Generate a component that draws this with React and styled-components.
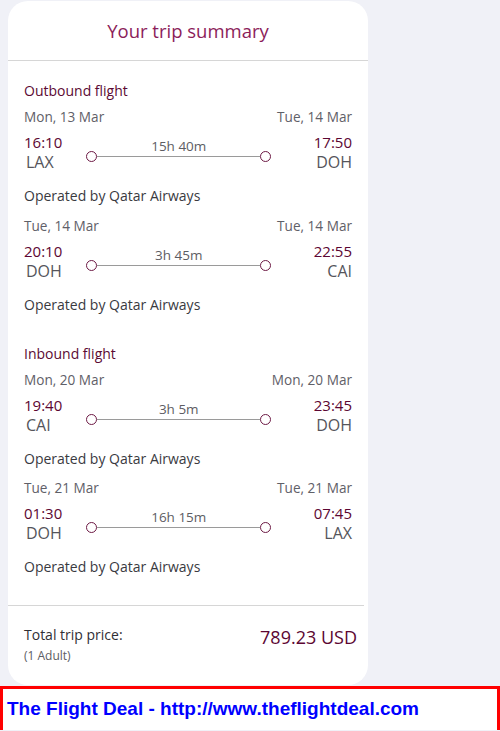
import React from "react";
import styled, { createGlobalStyle } from "styled-components";

const Global = createGlobalStyle`
  html, body { margin: 0; padding: 0; background: #f0f1f7; }
  body { font-family: "Open Sans", "Noto Sans", sans-serif; }
  * { box-sizing: border-box; }
`;

const Page = styled.div`
  width: 500px;
  display: flex;
  flex-direction: column;
`;

const CardWrap = styled.div`
  padding: 1px 8px 1px 8px;
`;

const Card = styled.div`
  width: 360px;
  background: #fff;
  border-radius: 20px;
  overflow: hidden;
`;

const Header = styled.div`
  height: 60px;
  display: flex;
  align-items: center;
  justify-content: center;
  border-bottom: 1px solid #d6d6d6;
`;

const Title = styled.h2`
  margin: 0;
  font-weight: 400;
  font-size: 18.5px;
  line-height: 24px;
  color: #8c1d5a;
`;

const Body = styled.div`
  padding: 20px 16px 28px 16px;
  display: flex;
  flex-direction: column;
`;

const Section = styled.div`
  display: flex;
  flex-direction: column;
  gap: 9px;
  & + & { margin-top: 29.5px; }
  &:first-child { gap: 9.5px; }
`;

const SectionLabel = styled.div`
  font-size: 14px;
  line-height: 20px;
  color: #5c0a33;
  margin-bottom: -3.5px;
`;

const Segment = styled.div`
  display: flex;
  flex-direction: column;
`;

const DateRow = styled.div`
  display: flex;
  justify-content: space-between;
  font-size: 13.6px;
  line-height: 20px;
  color: #5f6068;
  margin-bottom: 5px;
`;

const TimeRow = styled.div`
  display: flex;
  align-items: flex-start;
`;

const Endpoint = styled.div`
  display: flex;
  flex-direction: column;
  align-items: ${(p) => (p.$right ? "flex-end" : "flex-start")};
  margin-left: ${(p) => (p.$right ? "auto" : "0")};
`;

const Time = styled.div`
  font-size: 15px;
  line-height: 20px;
  color: #5c0632;
`;

const Code = styled.div`
  font-size: 16px;
  line-height: 20px;
  color: #55555b;
  padding-left: ${(p) => (p.$right ? "0" : "2px")};
`;

const Middle = styled.div`
  width: 185px;
  margin-left: 24px;
  padding-top: 7px;
  display: flex;
  flex-direction: column;
`;

const Duration = styled.div`
  font-size: 13.5px;
  line-height: 14px;
  color: #5d5d63;
  text-align: center;
`;

const Track = styled.div`
  margin-top: -2px;
  height: 11px;
  display: flex;
  align-items: center;
`;

const Dot = styled.span`
  width: 11px;
  height: 11px;
  border-radius: 50%;
  border: 1.5px solid #6d1a45;
  background: #fff;
  flex: none;
`;

const Line = styled.span`
  flex: 1;
  height: 1px;
  background: #9a9a9a;
`;

const Operated = styled.div`
  margin-top: 14px;
  font-size: 14px;
  line-height: 20px;
  color: #3a3a3f;
`;

const Footer = styled.div`
  margin: 0 4px 0 0;
  border-top: 1px solid #d6d6d6;
  padding: 19px 7px 21px 16px;
  display: flex;
  justify-content: space-between;
  align-items: flex-start;
`;

const TotalLabel = styled.div`
  display: flex;
  flex-direction: column;
`;

const TotalText = styled.div`
  font-size: 14px;
  line-height: 20px;
  color: #2f2f35;
`;

const Adults = styled.div`
  margin-top: 3px;
  font-size: 12px;
  line-height: 16px;
  color: #5d5d63;
`;

const Price = styled.div`
  font-size: 18px;
  line-height: 24px;
  color: #5c0632;
`;

const Banner = styled.div`
  height: 44px;
  border: 3px solid #ff0000;
  border-bottom: none;
  background: #fff;
  display: flex;
  align-items: center;
  padding: 0 0 0 4px;
`;

const BannerText = styled.span`
  font-family: "Liberation Sans", Arial, sans-serif;
  font-weight: 700;
  font-size: 19px;
  line-height: 22px;
  color: #0000ff;
`;

const data = [
  {
    label: "Outbound flight",
    segs: [
      { d1: "Mon, 13 Mar", d2: "Tue, 14 Mar", t1: "16:10", t2: "17:50", c1: "LAX", c2: "DOH", dur: "15h 40m" },
      { d1: "Tue, 14 Mar", d2: "Tue, 14 Mar", t1: "20:10", t2: "22:55", c1: "DOH", c2: "CAI", dur: "3h 45m" },
    ],
  },
  {
    label: "Inbound flight",
    segs: [
      { d1: "Mon, 20 Mar", d2: "Mon, 20 Mar", t1: "19:40", t2: "23:45", c1: "CAI", c2: "DOH", dur: "3h 5m" },
      { d1: "Tue, 21 Mar", d2: "Tue, 21 Mar", t1: "01:30", t2: "07:45", c1: "DOH", c2: "LAX", dur: "16h 15m" },
    ],
  },
];

export default function App() {
  return (
    <>
      <Global />
      <Page>
        <CardWrap>
          <Card>
            <Header>
              <Title>Your trip summary</Title>
            </Header>
            <Body>
              {data.map((s) => (
                <Section key={s.label}>
                  <SectionLabel>{s.label}</SectionLabel>
                  {s.segs.map((g, i) => (
                    <Segment key={i}>
                      <DateRow>
                        <span>{g.d1}</span>
                        <span>{g.d2}</span>
                      </DateRow>
                      <TimeRow>
                        <Endpoint>
                          <Time>{g.t1}</Time>
                          <Code>{g.c1}</Code>
                        </Endpoint>
                        <Middle>
                          <Duration>{g.dur}</Duration>
                          <Track>
                            <Dot />
                            <Line />
                            <Dot />
                          </Track>
                        </Middle>
                        <Endpoint $right>
                          <Time>{g.t2}</Time>
                          <Code $right>{g.c2}</Code>
                        </Endpoint>
                      </TimeRow>
                      <Operated>Operated by Qatar Airways</Operated>
                    </Segment>
                  ))}
                </Section>
              ))}
            </Body>
            <Footer>
              <TotalLabel>
                <TotalText>Total trip price:</TotalText>
                <Adults>(1 Adult)</Adults>
              </TotalLabel>
              <Price>789.23 USD</Price>
            </Footer>
          </Card>
        </CardWrap>
        <Banner>
          <BannerText>The Flight Deal - http://www.theflightdeal.com</BannerText>
        </Banner>
      </Page>
    </>
  );
}
